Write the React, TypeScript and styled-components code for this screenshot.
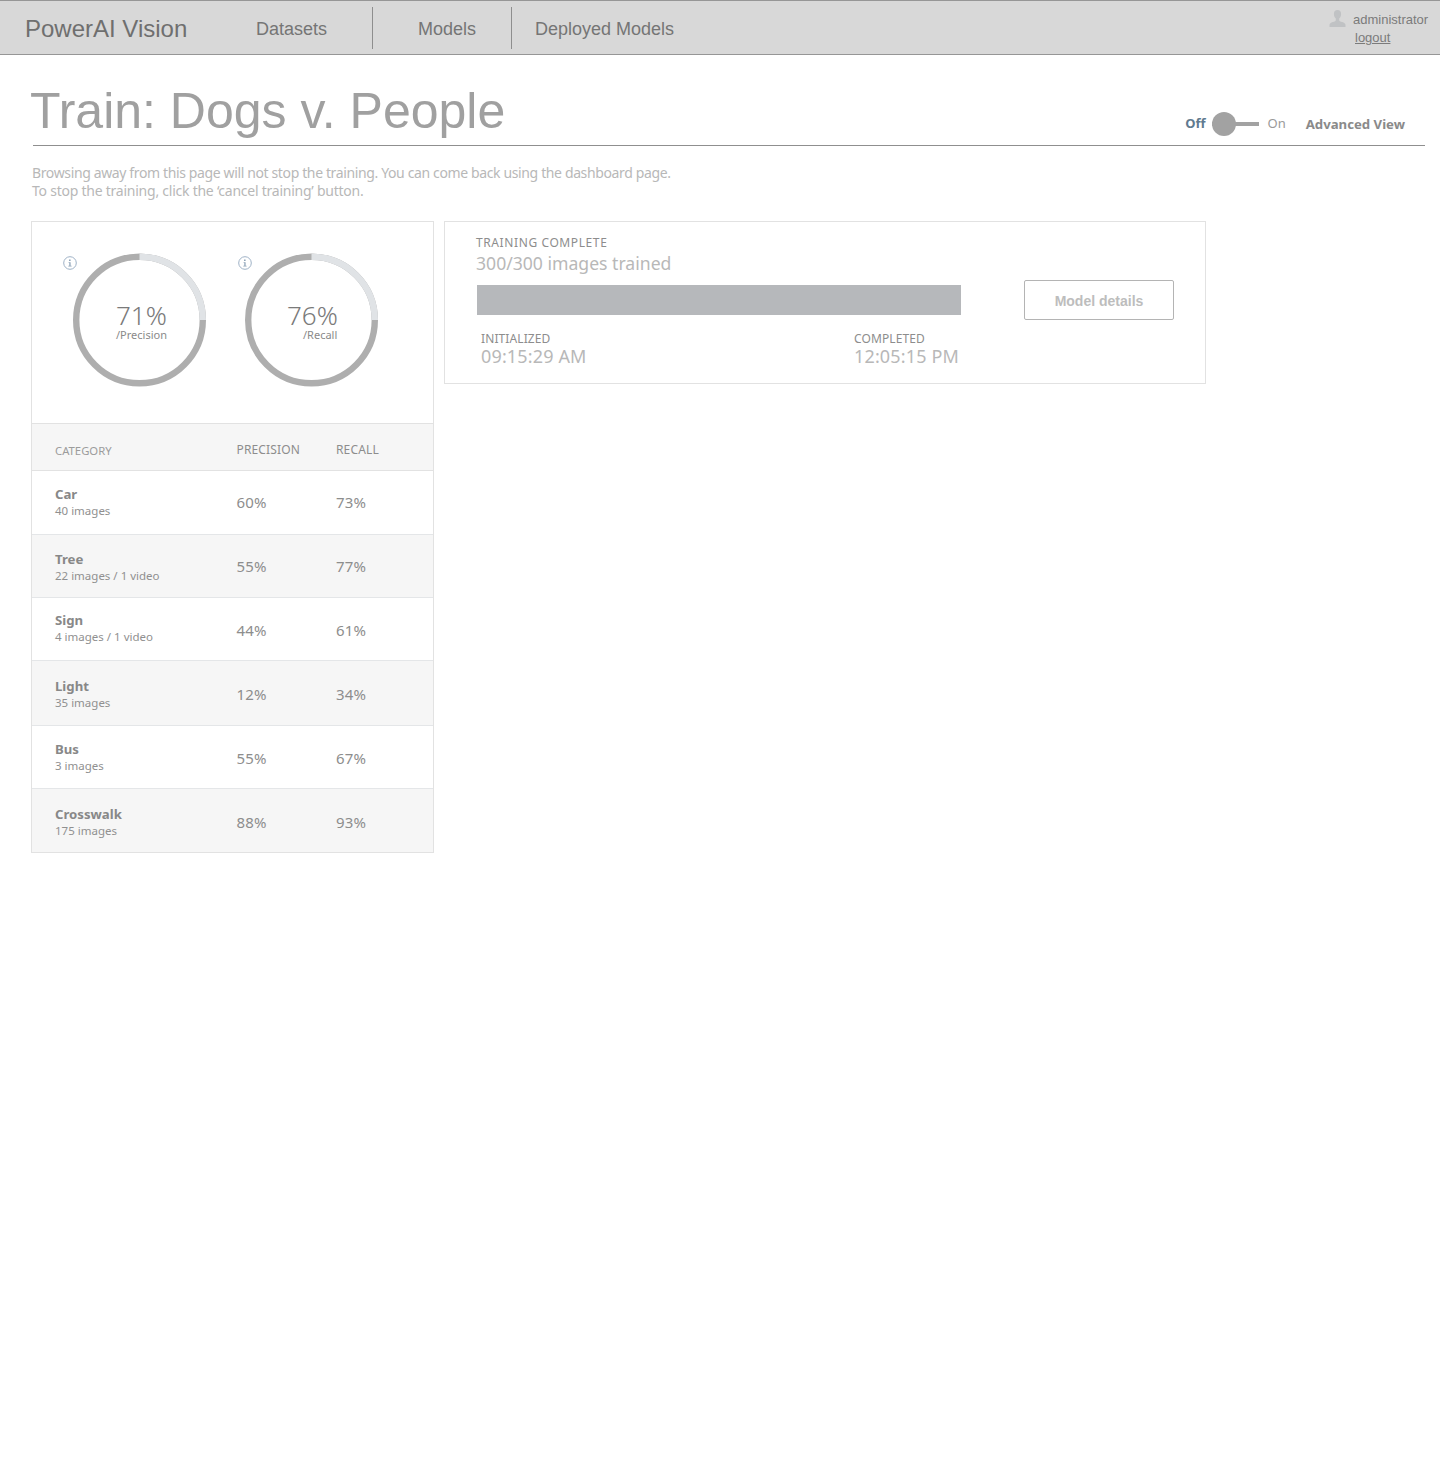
import React from "react";
import styled, { createGlobalStyle } from "styled-components";

const plex = `"Noto Sans", "Open Sans", sans-serif`;
const arial = `"Liberation Sans", Arial, sans-serif`;

const Global = createGlobalStyle`
  html, body { margin: 0; padding: 0; background: #fff; }
  body { font-family: ${plex}; }
  * { box-sizing: border-box; }
`;

const Page = styled.div`
  width: 1440px;
  height: 1466px;
  background: #fff;
  overflow: hidden;
`;

const TopBar = styled.header`
  height: 55px;
  display: flex;
  align-items: flex-start;
  background: #d8d8d8;
  border-top: 1px solid #969696;
  border-bottom: 1px solid #969696;
  font-family: ${arial};
`;

const Brand = styled.div`
  width: 256px;
  padding: 14px 0 0 25px;
  font-size: 24px;
  line-height: 28px;
  color: #6f6f6f;
`;

const NavItem = styled.a<{ $w: number; $pad: number; $divider?: boolean }>`
  width: ${(p) => p.$w}px;
  height: 42px;
  margin-top: 6px;
  padding: 9px 0 0 ${(p) => p.$pad}px;
  font-size: 18px;
  line-height: 26px;
  color: #757575;
  border-right: ${(p) => (p.$divider ? "1px solid #8e8e8e" : "none")};
`;

const UserBox = styled.div`
  margin-left: auto;
  width: 111px;
  padding-top: 10px;
  font-size: 13px;
  color: #7b7b7b;
`;

const UserRow = styled.div`
  display: flex;
  align-items: flex-start;
  gap: 7px;
  line-height: 18px;
`;

const UserIcon = styled.svg`
  margin-top: -1px;
`;

const Logout = styled.a`
  display: block;
  margin: 0 0 0 26px;
  line-height: 18px;
  text-decoration: underline;
`;

const Main = styled.main`
  padding: 0 15px 0 31px;
`;

const TitleRow = styled.div`
  height: 91px;
  margin-left: 2px;
  display: flex;
  align-items: flex-start;
  border-bottom: 1px solid #8f8f8f;
`;

const Title = styled.h1`
  margin: 26px 0 0 -3px;
  font-family: ${arial};
  font-weight: 400;
  font-size: 50px;
  line-height: 60px;
  color: #a0a0a0;
`;

const ViewToggle = styled.div`
  margin: 58px 20px 0 auto;
  display: flex;
  align-items: center;
  height: 22px;
  font-size: 13px;
`;

const ToggleLabel = styled.span<{ $active?: boolean }>`
  font-weight: ${(p) => (p.$active ? 700 : 400)};
  color: ${(p) => (p.$active ? "#5f7a8f" : "#9a9a9a")};
  line-height: 18px;
  margin-top: -2px;
`;

const Track = styled.span`
  position: relative;
  width: 47px;
  height: 4px;
  margin: 0 8px 0 7px;
  background: #a2a2a2;
`;

const Knob = styled.span`
  position: absolute;
  left: 0;
  top: -10px;
  width: 24px;
  height: 24px;
  border-radius: 50%;
  background: #a2a2a2;
`;

const AdvancedLabel = styled.span`
  margin: 0 0 0 20px;
  font-size: 13.2px;
  line-height: 18px;
  font-weight: 700;
  color: #8a8a8a;
`;

const Notice = styled.p`
  margin: 18px 0 21px 1px;
  font-size: 14px;
  line-height: 18px;
  color: #b8b8b8;
`;

const NoticeLine = styled.span<{ $track: number }>`
  display: block;
  letter-spacing: ${(p) => p.$track}px;
`;

const Columns = styled.div`
  display: flex;
  align-items: flex-start;
  gap: 10px;
`;

const LeftCard = styled.section`
  width: 403px;
  border: 1px solid #e2e2e2;
`;

const Gauges = styled.div`
  height: 201px;
  padding: 31px 0 0 29px;
  display: flex;
  gap: 26px;
`;

const GaugeBox = styled.div`
  position: relative;
  width: 146px;
  height: 135px;
  padding-left: 12px;
`;

const InfoMark = styled.svg<{ $left: number }>`
  position: absolute;
  left: ${(p) => p.$left}px;
  top: 3px;
`;

const GaugeText = styled.div<{ $pad: number }>`
  position: absolute;
  left: 0;
  top: 48px;
  width: 146px;
  padding-left: ${(p) => p.$pad}px;
  color: #8a8a8a;
`;

const GaugeValue = styled.div`
  font-size: 26px;
  font-weight: 300;
  line-height: 28px;
  color: #7a7a7a;
`;

const GaugeCaption = styled.div<{ $shift: number }>`
  margin-left: ${(p) => p.$shift}px;
  font-size: 11px;
  line-height: 12px;
`;

const tableGrid = `
  display: grid;
  grid-template-columns: 181.5px 99.5px 1fr;
  padding-left: 23px;
`;

const HeadRow = styled.div`
  ${tableGrid}
  height: 48px;
  background: #f6f6f6;
  border-top: 1px solid #e2e2e2;
  border-bottom: 1px solid #e2e2e2;
  padding-top: 17px;
  line-height: 18px;
`;

const HeadCell = styled.div<{ $small?: boolean }>`
  font-size: ${(p) => (p.$small ? 11.3 : 12)}px;
  letter-spacing: ${(p) => (p.$small ? 0 : 0.15)}px;
  color: ${(p) => (p.$small ? "#9c9c9c" : "#8d8d8d")};
  margin-top: ${(p) => (p.$small ? 1 : 0)}px;
`;

const DataRow = styled.div<{ $h: number; $alt: boolean; $top: number; $last: boolean }>`
  ${tableGrid}
  height: ${(p) => p.$h}px;
  padding-top: ${(p) => p.$top}px;
  background: ${(p) => (p.$alt ? "#f6f6f6" : "#fff")};
  border-bottom: ${(p) => (p.$last ? "none" : "1px solid #e4e6e8")};
`;

const CategoryName = styled.div`
  font-size: 13.2px;
  font-weight: 700;
  line-height: 17px;
  color: #888;
`;

const CategoryMeta = styled.div`
  font-size: 11.5px;
  line-height: 15px;
  color: #909090;
`;

const Metric = styled.div<{ $offset: number }>`
  font-size: 15px;
  letter-spacing: 0.2px;
  line-height: 20px;
  margin-top: ${(p) => p.$offset}px;
  color: #8d8d8d;
`;

const RightCard = styled.section`
  width: 762px;
  height: 163px;
  padding: 12px 31px 0 31px;
  border: 1px solid #e2e2e2;
  display: grid;
  grid-template-columns: 548px 150px;
`;

const ProgressCol = styled.div``;

const StatusLabel = styled.div`
  font-size: 12px;
  letter-spacing: 0.6px;
  line-height: 18px;
  color: #8d8d8d;
`;

const StatusCount = styled.div`
  margin-top: -1px;
  font-size: 17.6px;
  line-height: 24px;
  color: #b8b8b8;
`;

const Bar = styled.div`
  width: 484px;
  height: 30px;
  margin: 10px 0 0 1px;
  background: #b6b8bb;
`;

const Times = styled.div`
  width: 484px;
  display: grid;
  grid-template-columns: 373px 1fr;
  padding: 17px 0 0 5px;
`;

const TimeLabel = styled.div`
  font-size: 12px;
  letter-spacing: 0.1px;
  line-height: 14px;
  color: #8d8d8d;
`;

const TimeValue = styled.div`
  font-size: 18px;
  letter-spacing: 0.15px;
  line-height: 21px;
  color: #b8b8b8;
`;

const DetailsButton = styled.button`
  width: 150px;
  height: 40px;
  margin-top: 46px;
  padding-top: 2px;
  background: #fff;
  border: 1px solid #b4b4b4;
  border-radius: 2px;
  font-family: ${arial};
  font-size: 14px;
  font-weight: 700;
  color: #bdbdbd;
`;

const Gauge = ({ value, caption, pad, shift, info }: { value: string; caption: string; pad: number; shift: number; info: number }) => (
  <GaugeBox>
    <InfoMark $left={info} width="14" height="14" viewBox="0 0 14 14" fill="none">
      <circle cx="7" cy="7" r="6.3" stroke="#9fb2c6" strokeWidth="1" />
      <path d="M6 3.6h1.6v1.3H6zM5.6 6.2h2v3.6h1v.8H5.3v-.8h1V7H5.6z" fill="#8ea3b8" />
    </InfoMark>
    <svg width="133" height="134" viewBox="0 -0.5 133 134" fill="none">
      <circle cx="66.5" cy="66.5" r="63.3" stroke="#aeaeae" strokeWidth="6.4" />
      <path d="M66.5 3.2A63.3 63.3 0 0 1 129.8 66.5" stroke="#e0e3e6" strokeWidth="6.4" />
    </svg>
    <GaugeText $pad={pad}>
      <GaugeValue>{value}</GaugeValue>
      <GaugeCaption $shift={shift}>{caption}</GaugeCaption>
    </GaugeText>
  </GaugeBox>
);

const rows = [
  { name: "Car", meta: "40 images", p: "60%", r: "73%", h: 64, top: 15, off: 6 },
  { name: "Tree", meta: "22 images / 1 video", p: "55%", r: "77%", h: 63, top: 16, off: 5 },
  { name: "Sign", meta: "4 images / 1 video", p: "44%", r: "61%", h: 63, top: 14, off: 8 },
  { name: "Light", meta: "35 images", p: "12%", r: "34%", h: 65, top: 17, off: 6 },
  { name: "Bus", meta: "3 images", p: "55%", r: "67%", h: 63, top: 15, off: 7 },
  { name: "Crosswalk", meta: "175 images", p: "88%", r: "93%", h: 63, top: 17, off: 6 },
];

export default function App() {
  return (
    <Page>
      <Global />
      <TopBar>
        <Brand>PowerAI Vision</Brand>
        <NavItem $w={117} $pad={0} $divider>Datasets</NavItem>
        <NavItem $w={139} $pad={45} $divider>Models</NavItem>
        <NavItem $w={200} $pad={23}>Deployed Models</NavItem>
        <UserBox>
          <UserRow>
            <UserIcon width="17" height="17" viewBox="0 0 17 17" fill="#c0c2c4">
              <path d="M8.5 0c2.3 0 3.6 1.6 3.6 4 0 2-.9 3.6-1.9 4.6v1.6c0 .7 1.2 1.2 3 1.9 2 .8 3.3 1.4 3.3 3V17H.5v-1.9c0-1.6 1.3-2.2 3.3-3 1.8-.7 3-1.2 3-1.9V8.6C5.8 7.6 4.9 6 4.9 4c0-2.4 1.3-4 3.6-4z" />
            </UserIcon>
            administrator
          </UserRow>
          <Logout>logout</Logout>
        </UserBox>
      </TopBar>
      <Main>
        <TitleRow>
          <Title>Train: Dogs v. People</Title>
          <ViewToggle>
            <ToggleLabel $active>Off</ToggleLabel>
            <Track><Knob /></Track>
            <ToggleLabel>On</ToggleLabel>
            <AdvancedLabel>Advanced View</AdvancedLabel>
          </ViewToggle>
        </TitleRow>
        <Notice>
          <NoticeLine $track={-0.37}>Browsing away from this page will not stop the training. You can come back using the dashboard page.</NoticeLine>
          <NoticeLine $track={-0.24}>To stop the training, click the ‘cancel training’ button.</NoticeLine>
        </Notice>
        <Columns>
          <LeftCard>
            <Gauges>
              <Gauge value="71%" caption="/Precision" pad={55} shift={0} info={2} />
              <Gauge value="76%" caption="/Recall" pad={54} shift={16} info={5} />
            </Gauges>
            <HeadRow>
              <HeadCell $small>CATEGORY</HeadCell>
              <HeadCell>PRECISION</HeadCell>
              <HeadCell>RECALL</HeadCell>
            </HeadRow>
            {rows.map((r, i) => (
              <DataRow key={r.name} $h={r.h} $alt={i % 2 === 1} $top={r.top} $last={i === rows.length - 1}>
                <div>
                  <CategoryName>{r.name}</CategoryName>
                  <CategoryMeta>{r.meta}</CategoryMeta>
                </div>
                <Metric $offset={r.off}>{r.p}</Metric>
                <Metric $offset={r.off}>{r.r}</Metric>
              </DataRow>
            ))}
          </LeftCard>
          <RightCard>
            <ProgressCol>
              <StatusLabel>TRAINING COMPLETE</StatusLabel>
              <StatusCount>300/300 images trained</StatusCount>
              <Bar />
              <Times>
                <div>
                  <TimeLabel>INITIALIZED</TimeLabel>
                  <TimeValue>09:15:29 AM</TimeValue>
                </div>
                <div>
                  <TimeLabel>COMPLETED</TimeLabel>
                  <TimeValue>12:05:15 PM</TimeValue>
                </div>
              </Times>
            </ProgressCol>
            <DetailsButton>Model details</DetailsButton>
          </RightCard>
        </Columns>
      </Main>
    </Page>
  );
}
